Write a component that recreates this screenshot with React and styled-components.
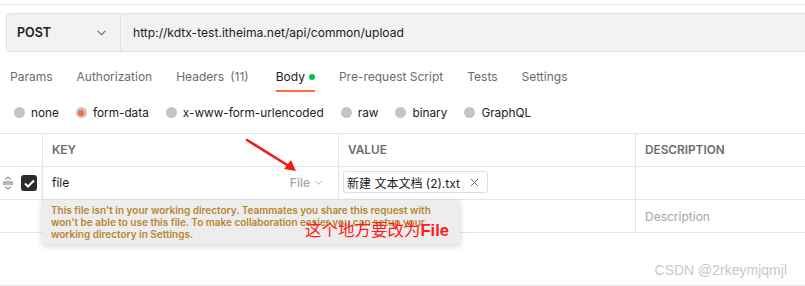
import React from "react"
import styled, { createGlobalStyle } from "styled-components"

const GlobalStyle = createGlobalStyle`
  body {
    margin: 0;
    background: #fff;
    font-family: Inter, "Noto Sans", "Noto Sans CJK SC", sans-serif;
    color: #212121;
  }
`

const Page = styled.div`
  position: relative;
  width: 805px;
  height: 282px;
  overflow: hidden;
  border-top: 1px solid #e8e8e8;
  margin-top: 4px;
  box-sizing: border-box;
`

const UrlBar = styled.div`
  display: flex;
  align-items: stretch;
  height: 37px;
  margin: 8px 0 0 6px;
  background: #f2f2f2;
  border: 1px solid #e3e3e3;
  border-right: none;
  border-radius: 4px 0 0 4px;
`

const Method = styled.div`
  width: 114px;
  display: flex;
  align-items: center;
  justify-content: space-between;
  padding: 0 13px 0 10px;
  box-sizing: border-box;
  border-right: 1px solid #e3e3e3;
  font-size: 12.5px;
  font-weight: 600;
  color: #212121;
`

const UrlText = styled.div`
  display: flex;
  align-items: center;
  padding-left: 12px;
  font-size: 12.1px;
  color: #212121;
`

const Tabs = styled.div`
  display: flex;
  height: 30px;
  margin-top: 10px;
  padding-left: 10px;
  gap: 24px;
`

const Tab = styled.div`
  display: flex;
  align-items: center;
  gap: 4px;
  height: 30px;
  font-size: 12px;
  color: ${(p) => (p.active ? "#212121" : "#6b6b6b")};
  box-sizing: border-box;
  border-bottom: 2px solid ${(p) => (p.active ? "#ff6c37" : "transparent")};
  padding-top: 1px;
`

const Count = styled.span`
  margin-left: 2px;
  padding-right: 3px;
`

const Dot = styled.span`
  width: 6px;
  height: 6px;
  border-radius: 50%;
  background: #0cbb52;
`

const Radios = styled.div`
  display: flex;
  align-items: center;
  height: 41px;
  padding-left: 14px;
  gap: 17px;
`

const Radio = styled.label`
  display: flex;
  align-items: center;
  gap: 6px;
  font-size: 11.8px;
  color: #212121;
`

const RadioCircle = styled.span`
  width: 11px;
  height: 11px;
  border-radius: 50%;
  background: #c4c4c4;
  display: flex;
  align-items: center;
  justify-content: center;
  &::after {
    content: "";
    width: 6px;
    height: 6px;
    border-radius: 50%;
    background: ${(p) => (p.checked ? "#ff6c37" : "transparent")};
  }
`

const Table = styled.div`
  display: grid;
  grid-template-columns: 42px 296px 297px 1fr;
  border-top: 1px solid #e6e6e6;
`

const Cell = styled.div`
  height: 33px;
  box-sizing: border-box;
  border-bottom: 1px solid #e6e6e6;
  border-left: ${(p) => (p.first ? "none" : "1px solid #e6e6e6")};
  display: flex;
  align-items: center;
  padding: 0 9px;
  font-size: 12px;
`

const HeadCell = styled(Cell)`
  font-size: 11.8px;
  font-weight: 600;
  color: #6b6b6b;
  padding-bottom: 1px;
`

const HandleCell = styled(Cell)`
  padding: 0 4px 0 2px;
  gap: 7px;
  border-right: 1px solid #fdf3d0;
`

const Check = styled.span`
  width: 16px;
  height: 16px;
  border-radius: 3px;
  background: #2b2b2b;
  display: flex;
  align-items: center;
  justify-content: center;
`

const KeyCell = styled(Cell)`
  justify-content: space-between;
  padding-right: 15px;
  padding-bottom: 2px;
`

const TypePick = styled.span`
  display: flex;
  align-items: center;
  gap: 4px;
  color: #a6a6a6;
  font-weight: 500;
`

const ValueCell = styled(Cell)`
  padding-bottom: 2px;
`

const Chip = styled.span`
  display: flex;
  align-items: center;
  gap: 10px;
  height: 20px;
  padding: 0 8px 0 3px;
  margin-left: -5px;
  border: 1px solid #dedede;
  border-radius: 3px;
  font-size: 12px;
  color: #212121;
`

const Placeholder = styled.span`
  color: #a6a6a6;
`

const Tooltip = styled.div`
  position: absolute;
  left: 42px;
  top: 195px;
  width: 418px;
  height: 44px;
  box-sizing: border-box;
  padding: 4px 9px;
  background: #ededed;
  border-radius: 4px;
  box-shadow: 0 2px 6px rgba(0, 0, 0, 0.18);
  font-size: 10px;
  font-weight: 600;
  line-height: 12px;
  color: #b8872e;
`

const Note = styled.div`
  position: absolute;
  left: 305px;
  top: 212px;
  font-family: "Noto Sans CJK SC", sans-serif;
  font-size: 16.5px;
  color: #ff1a1a;
  & b {
    font-family: "Liberation Sans", Arial, sans-serif;
    font-weight: 700;
  }
`

const Arrow = styled.svg`
  position: absolute;
  left: 240px;
  top: 132px;
`

const Watermark = styled.div`
  position: absolute;
  right: 18px;
  top: 257px;
  font-family: "Liberation Sans", sans-serif;
  font-size: 14px;
  color: #c8c8c8;
`

const BottomRule = styled.div`
  position: absolute;
  left: 0;
  right: 0;
  bottom: 0;
  border-top: 1px solid #e8e8e8;
`

const Chevron = ({ color = "#6b6b6b", size = 9 }) => (
  <svg width={size} height={size} viewBox="0 0 10 10">
    <path d="M1.5 3.5 L5 7 L8.5 3.5" fill="none" stroke={color} strokeWidth="1" />
  </svg>
)

const Handle = () => (
  <svg width="12" height="14" viewBox="0 0 12 14">
    <path d="M3 3.5 L6 1 L9 3.5" fill="none" stroke="#6b6b6b" strokeWidth="1" />
    <path d="M1 6 H11 M1 8 H11" stroke="#6b6b6b" strokeWidth="1" />
    <path d="M3 10.5 L6 13 L9 10.5" fill="none" stroke="#6b6b6b" strokeWidth="1" />
  </svg>
)

const bodyTypes = ["none", "form-data", "x-www-form-urlencoded", "raw", "binary", "GraphQL"]
const tabs = [
  { label: "Params" },
  { label: "Authorization" },
  { label: "Headers", count: 11 },
  { label: "Body", active: true },
  { label: "Pre-request Script" },
  { label: "Tests" },
  { label: "Settings" },
]

export default function App() {
  return (
    <Page>
      <GlobalStyle />
      <UrlBar>
        <Method>
          POST
          <Chevron size={11} />
        </Method>
        <UrlText>http://kdtx-test.itheima.net/api/common/upload</UrlText>
      </UrlBar>
      <Tabs>
        {tabs.map((t) => (
          <Tab key={t.label} active={t.active}>
            {t.label}
            {t.count && <Count>({t.count})</Count>}
            {t.active && <Dot />}
          </Tab>
        ))}
      </Tabs>
      <Radios>
        {bodyTypes.map((t) => (
          <Radio key={t}>
            <RadioCircle checked={t === "form-data"} />
            {t}
          </Radio>
        ))}
      </Radios>
      <Table>
        <HeadCell first />
        <HeadCell>KEY</HeadCell>
        <HeadCell>VALUE</HeadCell>
        <HeadCell>DESCRIPTION</HeadCell>

        <HandleCell first>
          <Handle />
          <Check>
            <svg width="11" height="9" viewBox="0 0 11 9">
              <path d="M1 4.5 L4 7.5 L10 1.5" fill="none" stroke="#fff" strokeWidth="2" />
            </svg>
          </Check>
        </HandleCell>
        <KeyCell>
          file
          <TypePick>
            File
            <Chevron color="#a6a6a6" />
          </TypePick>
        </KeyCell>
        <ValueCell>
          <Chip>
            新建 文本文档 (2).txt
            <svg width="9" height="9" viewBox="0 0 9 9">
              <path d="M1 1 L8 8 M8 1 L1 8" stroke="#6b6b6b" strokeWidth="1" />
            </svg>
          </Chip>
        </ValueCell>
        <Cell />

        <Cell first />
        <Cell />
        <Cell />
        <Cell>
          <Placeholder>Description</Placeholder>
        </Cell>
      </Table>

      <Tooltip>
        This file isn't in your working directory. Teammates you share this request with
        <br />
        won't be able to use this file. To make collaboration easier you can setup your
        <br />
        working directory in Settings.
      </Tooltip>
      <Note>
        这个地方要改为<b>File</b>
      </Note>
      <Arrow width="62" height="40" viewBox="0 0 62 40">
        <path d="M7 3 L52 31" stroke="#f01d1d" strokeWidth="2.6" strokeLinecap="round" />
        <path d="M56 34 L44 32 L51 23 Z" fill="#f01d1d" />
      </Arrow>
      <Watermark>CSDN @2rkeymjqmjl</Watermark>
      <BottomRule />
    </Page>
  )
}
